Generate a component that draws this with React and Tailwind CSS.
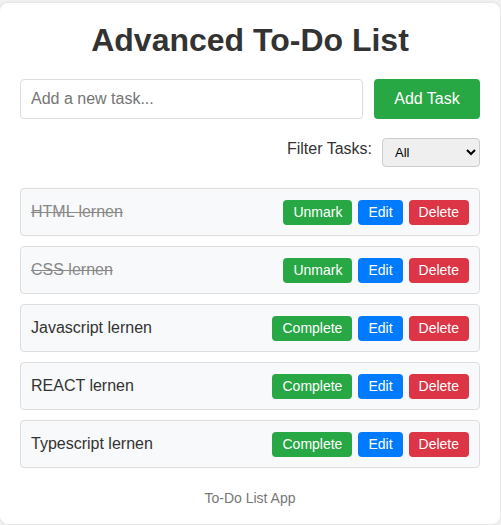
import { useState } from 'react';

const initialTasks = [
  { id: 1, text: 'HTML lernen', done: true },
  { id: 2, text: 'CSS lernen', done: true },
  { id: 3, text: 'Javascript lernen', done: false },
  { id: 4, text: 'REACT lernen', done: false },
  { id: 5, text: 'Typescript lernen', done: false },
];

const App = () => {
  const [tasks, setTasks] = useState(initialTasks);
  const [filter, setFilter] = useState('all');
  const [input, setInput] = useState('');

  const shown = tasks.filter((t) =>
    filter === 'all' ? true : filter === 'completed' ? t.done : !t.done
  );

  const addTask = () => {
    if (!input.trim()) return;
    setTasks([...tasks, { id: Date.now(), text: input.trim(), done: false }]);
    setInput('');
  };

  return (
    <div
      className="min-h-[525px] bg-[#f2f2f2] pt-[3px]"
      style={{ fontFamily: '"Liberation Sans", Arial, sans-serif' }}
    >
      <div className="w-[500px] h-[521px] bg-white rounded-lg shadow-[0_0_4px_rgba(0,0,0,0.1)] px-5 pt-[19px]">
        <h1 className="text-center text-[32px] leading-[37px] font-bold text-[#333]">Advanced To-Do List</h1>

        <div className="flex gap-[11px] mt-[20px]">
          <input
            value={input}
            onChange={(e) => setInput(e.target.value)}
            placeholder="Add a new task..."
            className="flex-1 h-[40px] border border-[#ddd] rounded px-[10px] text-base text-[#333] placeholder:text-[#757575] outline-none"
          />
          <button
            onClick={addTask}
            className="w-[106px] h-[40px] bg-[#28a745] text-white text-base rounded"
          >
            Add Task
          </button>
        </div>

        <div className="flex justify-end items-start gap-[10px] mt-[19px]">
          <label className="text-base text-[#333] leading-[18px] mt-[2px]">Filter Tasks:</label>
          <select
            value={filter}
            onChange={(e) => setFilter(e.target.value)}
            className="w-[98px] h-[29px] bg-[#efefef] border border-[#ccc] rounded text-[13px] text-black px-[8px] outline-none"
          >
            <option value="all">All</option>
            <option value="completed">Completed</option>
            <option value="pending">Pending</option>
          </select>
        </div>

        <ul className="mt-[21px] flex flex-col gap-[10px]">
          {shown.map((task) => (
            <li
              key={task.id}
              className="h-[48px] flex items-center justify-between bg-[#f8f9fa] border border-[#ddd] rounded px-[10px]"
            >
              <span className={task.done ? 'text-base line-through text-[#888]' : 'text-base text-[#333]'}>
                {task.text}
              </span>
              <div className="flex gap-[6px]">
                <button
                  onClick={() => setTasks(tasks.map((t) => (t.id === task.id ? { ...t, done: !t.done } : t)))}
                  className="h-[25px] px-[10px] bg-[#28a745] text-white text-sm rounded"
                >
                  {task.done ? 'Unmark' : 'Complete'}
                </button>
                <button className="h-[25px] px-[10px] bg-[#007bff] text-white text-sm rounded">Edit</button>
                <button
                  onClick={() => setTasks(tasks.filter((t) => t.id !== task.id))}
                  className="h-[25px] px-[10px] bg-[#dc3545] text-white text-sm rounded"
                >
                  Delete
                </button>
              </div>
            </li>
          ))}
        </ul>

        <p className="text-center text-sm text-[#777] mt-[20px]">To-Do List App</p>
      </div>
    </div>
  );
};

export default App;
